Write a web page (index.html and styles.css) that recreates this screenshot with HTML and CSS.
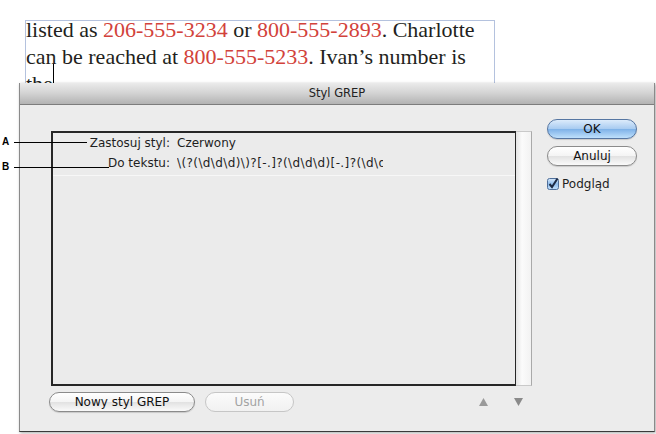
FILE: index.html
```html
<!DOCTYPE html>
<html lang="pl">
<head>
    <meta charset="UTF-8">
    <meta name="viewport" content="width=device-width, initial-scale=1.0">
    <title>Styl GREP</title>
    <link rel="stylesheet" href="styles.css">
</head>
<body>
    <div class="text-frame">
        <p class="story">listed as <span class="match">206-555-3234</span> or <span class="match">800-555-2893</span>. Charlotte<br>can be reached at <span class="match">800-555-5233</span>. Ivan’s number is<br>the<span class="caret"></span></p>
    </div>

    <div class="dialog">
        <div class="titlebar">Styl GREP</div>
        <div class="dialog-body">
            <div class="main-col">
                <div class="style-list">
                    <div class="list-box">
                        <div class="rule">
                            <span class="field-label">Zastosuj styl:</span>
                            <span class="field-value">Czerwony</span>
                            <span class="field-label">Do tekstu:</span>
                            <span class="field-value regex">\(?(\d\d\d)\)?[-.]?(\d\d\d)[-.]?(\d\d\d\d)</span>
                        </div>
                    </div>
                    <div class="scroll-track"></div>
                </div>
                <div class="list-actions">
                    <button class="aqua-btn new-style">Nowy styl GREP</button>
                    <button class="aqua-btn remove" disabled>Usuń</button>
                    <div class="order-arrows">
                        <svg width="9" height="8" viewBox="0 0 9 8"><polygon points="4.5,0 9,8 0,8" fill="#9a9a9a"/></svg>
                        <svg width="9" height="8" viewBox="0 0 9 8"><polygon points="0,0 9,0 4.5,8" fill="#8a8a8a"/></svg>
                    </div>
                </div>
            </div>
            <div class="side-col">
                <button class="aqua-btn default">OK</button>
                <button class="aqua-btn">Anuluj</button>
                <label class="check">
                    <svg width="12" height="12" viewBox="0 0 12 12">
                        <defs>
                            <linearGradient id="boxFill" x1="0" y1="0" x2="0" y2="1">
                                <stop offset="0" stop-color="#d7e8fa"/>
                                <stop offset="0.5" stop-color="#8fbcec"/>
                                <stop offset="1" stop-color="#c4e0fb"/>
                            </linearGradient>
                        </defs>
                        <rect x="0.5" y="0.5" width="11" height="11" rx="2" fill="url(#boxFill)" stroke="#4f6f9a"/>
                        <path d="M2.5 6 L5 9 L10.5 0.5" fill="none" stroke="#1c2a44" stroke-width="2"/>
                    </svg>
                    Podgląd
                </label>
            </div>
        </div>
    </div>

    <div class="callout callout-a"><span class="callout-letter">A</span><span class="callout-line"></span></div>
    <div class="callout callout-b"><span class="callout-letter">B</span><span class="callout-line"></span></div>
</body>
</html>
```

FILE: styles.css
```css
body {
    margin: 0;
    background: #ffffff;
    font-family: "DejaVu Sans", sans-serif;
    overflow: hidden;
}

/* text frame behind the dialog */
.text-frame {
    margin: 20px 0 0 25px;
    width: 468px;
    height: 140px;
    border: 1px solid #b4c2de;
}

.story {
    margin: -5px 0 0 0;
    font-family: "Liberation Serif", serif;
    font-size: 22px;
    line-height: 27px;
    color: #231f20;
    white-space: nowrap;
}

.match {
    color: #d2423b;
}

.caret {
    display: inline-block;
    width: 1px;
    height: 27px;
    margin-top: -6px;
    background: #000000;
}

/* dialog window */
.dialog {
    position: absolute;
    left: 19px;
    top: 83px;
    width: 636px;
    box-sizing: border-box;
    border: 1px solid #8a8a8a;
    border-top: none;
    border-bottom-color: #3a3a3a;
    background: #ececec;
    box-shadow: 1px 1px 3px rgba(0, 0, 0, 0.35);
}

.titlebar {
    height: 21px;
    line-height: 21px;
    border-bottom: 1px solid #7d7d7d;
    background: linear-gradient(#ebebeb, #d2d2d2 50%, #b3b3b3);
    text-align: center;
    font-size: 11.5px;
    color: #222;
}

.dialog-body {
    display: flex;
    gap: 15px;
    padding: 14px 18px 19px 31px;
}

.main-col {
    width: 481px;
    margin-top: 12px;
}

.style-list {
    display: flex;
    height: 255px;
}

.list-box {
    width: 465px;
    box-sizing: border-box;
    border: 2px solid #262626;
    border-right-width: 1px;
    background: #ebebeb;
}

.rule {
    display: grid;
    grid-template-columns: 117px 206px;
    column-gap: 7px;
    padding-bottom: 2px;
    border-bottom: 1px solid #f7f7f7;
    font-size: 12px;
    line-height: 20px;
    color: #1e1e1e;
}

.field-label {
    text-align: right;
}

.field-value {
    overflow: hidden;
    white-space: nowrap;
}

.regex {
    letter-spacing: 0.4px;
}

.scroll-track {
    width: 16px;
    box-sizing: border-box;
    border-right: 1px solid #a9a9a9;
    border-top: 1px solid #c9c9c9;
    border-bottom: 1px solid #c9c9c9;
    background: linear-gradient(90deg, #e4e4e4, #fbfbfb 40%, #f2f2f2);
}

.list-actions {
    display: flex;
    align-items: center;
    gap: 10px;
    margin-top: 6px;
    margin-left: -2px;
    padding-right: 9px;
}

.order-arrows {
    display: flex;
    gap: 26px;
    margin-left: auto;
}

/* aqua buttons */
.aqua-btn {
    height: 20px;
    padding: 0;
    border: 1px solid #8b8b8b;
    border-radius: 10px;
    background: linear-gradient(#ffffff, #f4f4f4 50%, #e2e2e2 52%, #fafafa);
    box-shadow: 0 1px 1px rgba(0, 0, 0, 0.15);
    font-family: "DejaVu Sans", sans-serif;
    font-size: 12px;
    color: #111;
}

.new-style {
    width: 146px;
}

.remove {
    width: 89px;
}

.aqua-btn:disabled {
    border-color: #c6c6c6;
    background: linear-gradient(#fbfbfb, #f1f1f1);
    box-shadow: none;
    color: #a3a3a3;
}

.side-col {
    display: flex;
    flex-direction: column;
    width: 89px;
}

.side-col .aqua-btn {
    width: 90px;
    margin-bottom: 7px;
}

.aqua-btn.default {
    border-color: #5676a2;
    background: linear-gradient(#dcebfb, #a9ccf1 48%, #7fb2e8 52%, #bfe0fc);
}

.check {
    display: flex;
    align-items: center;
    gap: 3px;
    margin-top: 4px;
    font-size: 12px;
    color: #1e1e1e;
}

/* callout letters */
.callout {
    position: absolute;
    left: 2px;
    display: flex;
    align-items: center;
    gap: 5px;
}

.callout-a {
    top: 135px;
}

.callout-b {
    top: 160px;
}

.callout-letter {
    font-family: "Liberation Sans", sans-serif;
    font-weight: bold;
    font-size: 10px;
    line-height: 14px;
    color: #000;
}

.callout-line {
    height: 1px;
    background: #000;
}

.callout-a .callout-line {
    width: 73px;
}

.callout-b .callout-line {
    width: 95px;
}
```
